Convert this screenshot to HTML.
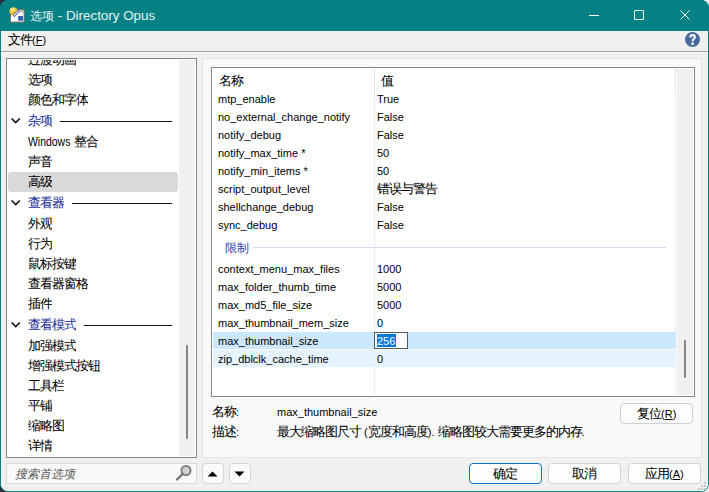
<!DOCTYPE html>
<html><head><meta charset="utf-8"><style>
html,body{margin:0;padding:0;}
body{width:709px;height:492px;position:relative;overflow:hidden;background:#ececec;font-family:'Liberation Sans', sans-serif;font-size:12px;color:#000;}
.t{position:absolute;white-space:pre;line-height:16px;font-size:11px}
.c{font-size:13px;letter-spacing:-1px;-webkit-text-stroke:0.05px}
.abs{position:absolute;}
</style></head><body>
<div style="position:absolute;left:0px;top:0px;width:20px;height:20px;background:#2b2e3b"></div>
<div style="position:absolute;left:0px;top:472px;width:20px;height:20px;background:#2b2e3b"></div>
<div style="position:absolute;left:689px;top:0px;width:20px;height:20px;background:#ececec"></div>
<div style="position:absolute;left:689px;top:472px;width:20px;height:20px;background:#ececec"></div>
<div style="position:absolute;left:0px;top:0px;width:709px;height:492px;box-sizing:border-box;border:1px solid #038184;border-radius:8px;background:#f0f0f0;overflow:hidden"></div>
<div style="position:absolute;left:1px;top:1px;width:707px;height:490px;box-sizing:border-box;border:1px solid #fbf8f8;border-radius:7px"></div>
<div style="position:absolute;left:0px;top:0px;width:709px;height:31px;background:#038184;border-radius:8px 8px 0 0"></div>
<svg class="abs" style="left:0px;top:0px" width="30" height="30" viewBox="0 0 30 30">
<rect x="10.5" y="9.5" width="13.6" height="12.6" fill="#fff" stroke="#786b6b" stroke-width="1"/>
<rect x="18.3" y="10.2" width="5" height="1.8" fill="#cfcfcf" stroke="#9a9a9a" stroke-width="0.5"/>
<rect x="18.2" y="16" width="4.7" height="4.7" fill="#2f5ea8"/>
<defs><radialGradient id="yg" cx="0.4" cy="0.3" r="0.7"><stop offset="0" stop-color="#fff2a8"/><stop offset="0.5" stop-color="#f5c93a"/><stop offset="1" stop-color="#d9a21a"/></radialGradient></defs>
<circle cx="13.4" cy="11.3" r="4" fill="url(#yg)"/>
<path d="M13.2 15.2 L17.6 10.8 Q18.8 10.4 19 11.6 L14.8 16.4 Q13.6 16.8 13.2 15.2 Z" fill="#fff" stroke="#3b35a0" stroke-width="0.9"/>
</svg>
<div class="t" style="left:30px;top:8px;font-size:13.4px;color:#e8f4f4;line-height:16px"><span class="c" style="font-size:12px;letter-spacing:0;-webkit-text-stroke:0">选项</span> - Directory Opus</div>
<div style="position:absolute;left:589px;top:15px;width:10px;height:1px;background:#fff"></div>
<div style="position:absolute;left:634px;top:10px;width:10px;height:10px;box-sizing:border-box;border:1px solid #fff;border-radius:1px"></div>
<svg class="abs" style="left:680px;top:10px" width="10" height="10" viewBox="0 0 10 10">
<path d="M0.5 0.5 L9.5 9.5 M9.5 0.5 L0.5 9.5" stroke="#fff" stroke-width="1"/></svg>
<div class="t" style="left:8px;top:32px;line-height:16px"><span class="c">文件</span>(<u>F</u>)</div>
<svg class="abs" style="left:685px;top:32px" width="15" height="15" viewBox="0 0 15 15">
<circle cx="7.5" cy="7.5" r="7.5" fill="#46699a"/>
<path d="M5.4 5.4 Q5.4 3 7.6 3 Q9.8 3 9.8 5 Q9.8 6.4 8.5 7.1 Q7.6 7.6 7.6 9.2" fill="none" stroke="#fff" stroke-width="2.2"/>
<circle cx="7.6" cy="11.7" r="1.4" fill="#fff"/></svg>
<div style="position:absolute;left:1px;top:51px;width:707px;height:1px;background:#a0a0a0"></div>
<div style="position:absolute;left:1px;top:52px;width:707px;height:1px;background:#fafafa"></div>
<div style="position:absolute;left:6px;top:58px;width:191px;height:400px;box-sizing:border-box;border:1px solid #828790;background:#fff;overflow:hidden"></div>
<div class="t" style="left:28px;top:52px;color:#000;font-size:10.6px;clip-path:inset(8px 0 0 0)"><span class="c">过渡动画</span></div>
<div class="t" style="left:28px;top:72px;color:#000;font-size:10.6px;clip-path:inset(0px 0 0 0)"><span class="c">选项</span></div>
<div class="t" style="left:28px;top:92px;color:#000;font-size:10.6px;clip-path:inset(0px 0 0 0)"><span class="c">颜色和字体</span></div>
<div class="t" style="left:28px;top:113px;color:#1a2e9c;font-size:10.6px;clip-path:inset(0px 0 0 0)"><span class="c">杂项</span></div>
<svg class="abs" style="left:11px;top:118px" width="10" height="7" viewBox="0 0 10 7"><path d="M0.6 0.5 L4.7 4.6 L8.8 0.5" fill="none" stroke="#1a1a1a" stroke-width="1.7"/></svg>
<div style="position:absolute;left:60px;top:121px;width:112px;height:1px;background:#111"></div>
<div class="t" style="left:28px;top:134px;color:#000;font-size:10.6px;clip-path:inset(0px 0 0 0)"><span style="display:inline-block;width:43px"><span style="display:inline-block;font-size:12px;transform:scaleX(0.87);transform-origin:0 0">Windows</span></span> <span class="c">整合</span></div>
<div class="t" style="left:28px;top:154px;color:#000;font-size:10.6px;clip-path:inset(0px 0 0 0)"><span class="c">声音</span></div>
<div style="position:absolute;left:8px;top:172px;width:170px;height:20px;background:#d9d9d9;border-radius:3px"></div>
<div class="t" style="left:28px;top:174px;color:#000;font-size:10.6px;clip-path:inset(0px 0 0 0)"><span class="c">高级</span></div>
<div class="t" style="left:28px;top:195px;color:#1a2e9c;font-size:10.6px;clip-path:inset(0px 0 0 0)"><span class="c">查看器</span></div>
<svg class="abs" style="left:11px;top:200px" width="10" height="7" viewBox="0 0 10 7"><path d="M0.6 0.5 L4.7 4.6 L8.8 0.5" fill="none" stroke="#1a1a1a" stroke-width="1.7"/></svg>
<div style="position:absolute;left:72px;top:203px;width:100px;height:1px;background:#111"></div>
<div class="t" style="left:28px;top:216px;color:#000;font-size:10.6px;clip-path:inset(0px 0 0 0)"><span class="c">外观</span></div>
<div class="t" style="left:28px;top:236px;color:#000;font-size:10.6px;clip-path:inset(0px 0 0 0)"><span class="c">行为</span></div>
<div class="t" style="left:28px;top:256px;color:#000;font-size:10.6px;clip-path:inset(0px 0 0 0)"><span class="c">鼠标按键</span></div>
<div class="t" style="left:28px;top:276px;color:#000;font-size:10.6px;clip-path:inset(0px 0 0 0)"><span class="c">查看器窗格</span></div>
<div class="t" style="left:28px;top:296px;color:#000;font-size:10.6px;clip-path:inset(0px 0 0 0)"><span class="c">插件</span></div>
<div class="t" style="left:28px;top:317px;color:#1a2e9c;font-size:10.6px;clip-path:inset(0px 0 0 0)"><span class="c">查看模式</span></div>
<svg class="abs" style="left:11px;top:322px" width="10" height="7" viewBox="0 0 10 7"><path d="M0.6 0.5 L4.7 4.6 L8.8 0.5" fill="none" stroke="#1a1a1a" stroke-width="1.7"/></svg>
<div style="position:absolute;left:84px;top:325px;width:88px;height:1px;background:#111"></div>
<div class="t" style="left:28px;top:338px;color:#000;font-size:10.6px;clip-path:inset(0px 0 0 0)"><span class="c">加强模式</span></div>
<div class="t" style="left:28px;top:358px;color:#000;font-size:10.6px;clip-path:inset(0px 0 0 0)"><span class="c">增强模式按钮</span></div>
<div class="t" style="left:28px;top:378px;color:#000;font-size:10.6px;clip-path:inset(0px 0 0 0)"><span class="c">工具栏</span></div>
<div class="t" style="left:28px;top:398px;color:#000;font-size:10.6px;clip-path:inset(0px 0 0 0)"><span class="c">平铺</span></div>
<div class="t" style="left:28px;top:418px;color:#000;font-size:10.6px;clip-path:inset(0px 0 0 0)"><span class="c">缩略图</span></div>
<div class="t" style="left:28px;top:438px;color:#000;font-size:10.6px;clip-path:inset(0px 0 0 0)"><span class="c">详情</span></div>
<div style="position:absolute;left:179px;top:60px;width:16px;height:396px;background:#f0f0f0"></div>
<div style="position:absolute;left:186px;top:345px;width:2px;height:94px;background:#858585;border-radius:1px"></div>
<div style="position:absolute;left:6px;top:463px;width:191px;height:21px;box-sizing:border-box;border:1px solid #d9d9d9;background:#f9f9f9"></div>
<div class="t" style="left:15px;top:466px;color:#5a5a5a;font-style:italic"><span class="c" style="font-size:12px;letter-spacing:0;-webkit-text-stroke:0">搜索首选项</span></div>
<svg class="abs" style="left:175px;top:464px" width="19" height="18" viewBox="0 0 19 18">
<circle cx="11" cy="6.5" r="4.6" fill="#d0d0d0" stroke="#777" stroke-width="1.8"/>
<path d="M7.7 9.8 L2 15.5" stroke="#777" stroke-width="2.4" stroke-linecap="round"/></svg>
<div style="position:absolute;left:202px;top:463px;width:22px;height:21px;box-sizing:border-box;border:1px solid #d5d5d5;border-radius:4px;background:#fbfbfb"></div>
<div style="position:absolute;left:229px;top:463px;width:22px;height:21px;box-sizing:border-box;border:1px solid #d5d5d5;border-radius:4px;background:#fbfbfb"></div>
<svg class="abs" style="left:207px;top:471px" width="11" height="6" viewBox="0 0 11 6"><path d="M0.5 5.5 L5.5 0.5 L10.5 5.5 Z" fill="#000"/></svg>
<svg class="abs" style="left:234px;top:471px" width="11" height="6" viewBox="0 0 11 6"><path d="M0.5 0.5 L5.5 5.5 L10.5 0.5 Z" fill="#000"/></svg>
<div style="position:absolute;left:202px;top:58px;width:500px;height:400px;box-sizing:border-box;border:1px solid #e6e6e6;background:#f9f9f9"></div>
<div style="position:absolute;left:211px;top:67px;width:484px;height:330px;box-sizing:border-box;border:1px solid #828790;background:#fff"></div>
<div style="position:absolute;left:374px;top:69px;width:1px;height:24px;background:#e5e5e5"></div>
<div style="position:absolute;left:675px;top:69px;width:1px;height:24px;background:#e5e5e5"></div>
<div style="position:absolute;left:374px;top:93px;width:1px;height:302px;background:#e3ecf8"></div>
<div style="position:absolute;left:675px;top:93px;width:1px;height:302px;background:#e3ecf8"></div>
<div style="position:absolute;left:677px;top:69px;width:16px;height:326px;background:#f0f0f0"></div>
<div style="position:absolute;left:684px;top:340px;width:2px;height:38px;background:#858585;border-radius:1px"></div>
<div class="t" style="left:219px;top:73px;"><span class="c">名称</span></div>
<div class="t" style="left:381px;top:73px;"><span class="c">值</span></div>
<div class="t" style="left:218px;top:91px;font-size:11px">mtp_enable</div>
<div class="t" style="left:377px;top:91px;font-size:11px">True</div>
<div class="t" style="left:218px;top:109px;font-size:11px">no_external_change_notify</div>
<div class="t" style="left:377px;top:109px;font-size:11px">False</div>
<div class="t" style="left:218px;top:127px;font-size:11px">notify_debug</div>
<div class="t" style="left:377px;top:127px;font-size:11px">False</div>
<div class="t" style="left:218px;top:145px;font-size:11px">notify_max_time *</div>
<div class="t" style="left:377px;top:145px;font-size:11px">50</div>
<div class="t" style="left:218px;top:163px;font-size:11px">notify_min_items *</div>
<div class="t" style="left:377px;top:163px;font-size:11px">50</div>
<div class="t" style="left:218px;top:181px;font-size:11px">script_output_level</div>
<div class="t" style="left:377px;top:181px;font-size:11px"><span class="c">错误与警告</span></div>
<div class="t" style="left:218px;top:199px;font-size:11px">shellchange_debug</div>
<div class="t" style="left:377px;top:199px;font-size:11px">False</div>
<div class="t" style="left:218px;top:217px;font-size:11px">sync_debug</div>
<div class="t" style="left:377px;top:217px;font-size:11px">False</div>
<div class="t" style="left:225px;top:240px;color:#3348b8"><span class="c" style="font-size:12px;letter-spacing:0">限制</span></div>
<div style="position:absolute;left:253px;top:247px;width:413px;height:1px;background:#d3dcef"></div>
<div class="t" style="left:218px;top:261px;font-size:11px">context_menu_max_files</div>
<div class="t" style="left:377px;top:261px;font-size:11px">1000</div>
<div class="t" style="left:218px;top:279px;font-size:11px">max_folder_thumb_time</div>
<div class="t" style="left:377px;top:279px;font-size:11px">5000</div>
<div class="t" style="left:218px;top:297px;font-size:11px">max_md5_file_size</div>
<div class="t" style="left:377px;top:297px;font-size:11px">5000</div>
<div class="t" style="left:218px;top:315px;font-size:11px">max_thumbnail_mem_size</div>
<div class="t" style="left:377px;top:315px;font-size:11px">0</div>
<div style="position:absolute;left:213px;top:332px;width:463px;height:17px;background:#cce8ff;border-radius:1px"></div>
<div class="t" style="left:218px;top:333px;font-size:11px">max_thumbnail_size</div>
<div style="position:absolute;left:374px;top:332px;width:34px;height:17px;box-sizing:border-box;border:1px solid #5a5a5a;background:#fff"></div>
<div style="position:absolute;left:377px;top:334px;width:19px;height:13px;background:#0078d7"></div>
<div class="t" style="left:377px;top:333px;font-size:11px;color:#fff">256</div>
<div style="position:absolute;left:213px;top:350px;width:463px;height:17px;background:#e5f3ff;border-radius:1px"></div>
<div class="t" style="left:218px;top:351px;font-size:11px">zip_dblclk_cache_time</div>
<div class="t" style="left:377px;top:351px;font-size:11px">0</div>
<div class="t" style="left:212px;top:404px;"><span class="c">名称</span>:</div>
<div class="t" style="left:277px;top:404px;font-size:11px">max_thumbnail_size</div>
<div class="t" style="left:212px;top:424px;"><span class="c">描述</span>:</div>
<div class="t" style="left:277px;top:424px;"><span class="c">最大缩略图尺寸</span> (<span class="c">宽度和高度</span>). <span class="c">缩略图较大需要更多的内存</span>.</div>
<div style="position:absolute;left:620px;top:403px;width:73px;height:21px;box-sizing:border-box;border:1px solid #d0d0d0;border-radius:4px;background:#fdfdfd"></div>
<div class="t" style="left:637px;top:406px;"><span class="c">复位</span>(<u>R</u>)</div>
<div style="position:absolute;left:469px;top:463px;width:73px;height:21px;box-sizing:border-box;border:1.5px solid #0a74d2;border-radius:4px;background:#fdfdfd"></div>
<div class="t" style="left:493px;top:466px;"><span class="c">确定</span></div>
<div style="position:absolute;left:548px;top:463px;width:73px;height:21px;box-sizing:border-box;border:1px solid #d0d0d0;border-radius:4px;background:#fdfdfd"></div>
<div class="t" style="left:572px;top:466px;"><span class="c">取消</span></div>
<div style="position:absolute;left:628px;top:463px;width:73px;height:21px;box-sizing:border-box;border:1px solid #d0d0d0;border-radius:4px;background:#fdfdfd"></div>
<div class="t" style="left:645px;top:466px;"><span class="c">应用</span>(<u>A</u>)</div>
<div class="abs" style="left:704px;top:482px;width:2px;height:2px;background:#c8c8c8"></div><div class="abs" style="left:701px;top:485px;width:2px;height:2px;background:#c8c8c8"></div><div class="abs" style="left:704px;top:485px;width:2px;height:2px;background:#c8c8c8"></div><div class="abs" style="left:698px;top:488px;width:2px;height:2px;background:#c8c8c8"></div><div class="abs" style="left:701px;top:488px;width:2px;height:2px;background:#c8c8c8"></div><div class="abs" style="left:704px;top:488px;width:2px;height:2px;background:#c8c8c8"></div>
</body></html>
